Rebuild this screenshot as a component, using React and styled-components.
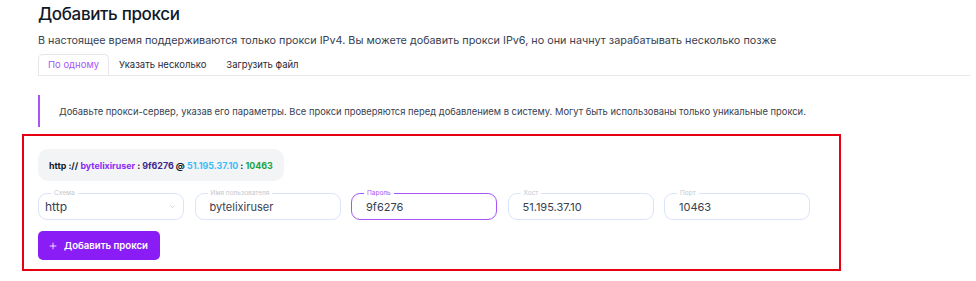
import React from 'react';
import styled, { createGlobalStyle } from 'styled-components';

const GlobalStyle = createGlobalStyle`
  body {
    margin: 0;
    background: #fff;
    font-family: Inter, "Noto Sans", sans-serif;
    color: #1f2937;
  }
`;

const Page = styled.div`
  padding: 0 0 0 38px;
`;

const Title = styled.h1`
  margin: 0;
  padding-top: 2px;
  font-size: 17px;
  line-height: 24px;
  font-weight: 500;
  letter-spacing: -0.35px;
  color: #111827;
`;

const Subtitle = styled.p`
  margin: 4px 0 0;
  font-size: 10.8px;
  line-height: 22px;
  color: #374151;
`;

const Tabs = styled.div`
  display: flex;
  margin-top: 2px;
  margin-right: 6px;
  border-bottom: 1px solid #e5e7eb;
  height: 21px;
`;

const Tab = styled.div`
  padding: 0 9px;
  font-size: 9.5px;
  line-height: 20px;
  color: ${(p) => (p.active ? '#a855f7' : '#1f2937')};
  border: 1px solid ${(p) => (p.active ? '#e5e7eb' : 'transparent')};
  border-bottom: ${(p) => (p.active ? '1px solid #fff' : 'none')};
  border-radius: 5px 5px 0 0;
  background: #fff;
`;

const Alert = styled.div`
  margin-top: 19px;
  height: 32px;
  border-left: 2px solid #a855f7;
  padding-left: 19px;
  display: flex;
  align-items: center;
  font-size: 9.4px;
  color: #374151;
`;

const Highlight = styled.div`
  margin: 7px 0 0 -16px;
  width: 787px;
  border: 2px solid #e60012;
  padding: 13px 14px 9px;
  display: flex;
  flex-direction: column;
  align-items: flex-start;
  gap: 12px;
`;

const Preview = styled.div`
  background: #f3f4f6;
  border-radius: 10px;
  height: 32px;
  padding: 0 11px;
  display: flex;
  align-items: center;
  font-size: 8.9px;
  font-weight: 700;
  color: #111827;
  white-space: pre;
`;

const Part = styled.span`
  color: ${(p) => p.color};
`;

const Fields = styled.div`
  display: flex;
  gap: 10.5px;
`;

const Field = styled.div`
  position: relative;
  width: 146px;
  height: 27px;
  box-sizing: border-box;
  border: 1px solid ${(p) => (p.focused ? '#a855f7' : '#dbe3fb')};
  border-radius: 9px;
  display: flex;
  align-items: center;
  padding: 0 ${(p) => (p.select ? '6px' : '14px')};
  color: #374151;
`;

const Label = styled.span`
  position: absolute;
  top: -5px;
  left: 12px;
  padding: 0 3px;
  background: #fff;
  font-size: 6.5px;
  line-height: 8px;
  color: ${(p) => (p.focused ? '#a855f7' : '#c3c8d2')};
`;

const Value = styled.span`
  flex: 1;
  font-size: ${(p) => (p.big ? '12px' : '11px')};
`;

const Button = styled.button`
  margin-top: -1px;
  height: 29px;
  padding: 0 12px 0 10px;
  border: none;
  border-radius: 5px;
  background: #8a1df6;
  color: #fff;
  font-family: inherit;
  font-size: 9.6px;
  font-weight: 600;
  display: flex;
  align-items: center;
  gap: 6px;
`;

const fields = [
  { label: 'Схема', value: 'http', select: true },
  { label: 'Имя пользователя', value: 'bytelixiruser' },
  { label: 'Пароль', value: '9f6276', focused: true },
  { label: 'Хост', value: '51.195.37.10' },
  { label: 'Порт', value: '10463' },
];

export default function App() {
  return (
    <Page>
      <GlobalStyle />
      <Title>Добавить прокси</Title>
      <Subtitle>
        В настоящее время поддерживаются только прокси IPv4. Вы можете добавить прокси IPv6, но они начнут зарабатывать несколько позже
      </Subtitle>
      <Tabs>
        <Tab active>По одному</Tab>
        <Tab>Указать несколько</Tab>
        <Tab>Загрузить файл</Tab>
      </Tabs>
      <Alert>
        Добавьте прокси-сервер, указав его параметры. Все прокси проверяются перед добавлением в систему. Могут быть использованы только уникальные прокси.
      </Alert>
      <Highlight>
        <Preview>
          {'http :// '}
          <Part color="#8b2cf5">bytelixiruser</Part>
          {' : '}
          <Part color="#3b2a8f">9f6276</Part>
          {' @ '}
          <Part color="#38bdf8">51.195.37.10</Part>
          {' : '}
          <Part color="#16a34a">10463</Part>
        </Preview>
        <Fields>
          {fields.map((f) => (
            <Field key={f.label} focused={f.focused} select={f.select}>
              <Label focused={f.focused}>{f.label}</Label>
              <Value big={f.select}>{f.value}</Value>
              {f.select && (
                <svg width="9" height="9" viewBox="0 0 24 24" fill="none" stroke="#c3c8d2" strokeWidth="2">
                  <path d="M6 9l6 6 6-6" />
                </svg>
              )}
            </Field>
          ))}
        </Fields>
        <Button>
          <svg width="10" height="10" viewBox="0 0 24 24" fill="none" stroke="#fff" strokeWidth="2">
            <path d="M12 4v16M4 12h16" />
          </svg>
          Добавить прокси
        </Button>
      </Highlight>
    </Page>
  );
}
